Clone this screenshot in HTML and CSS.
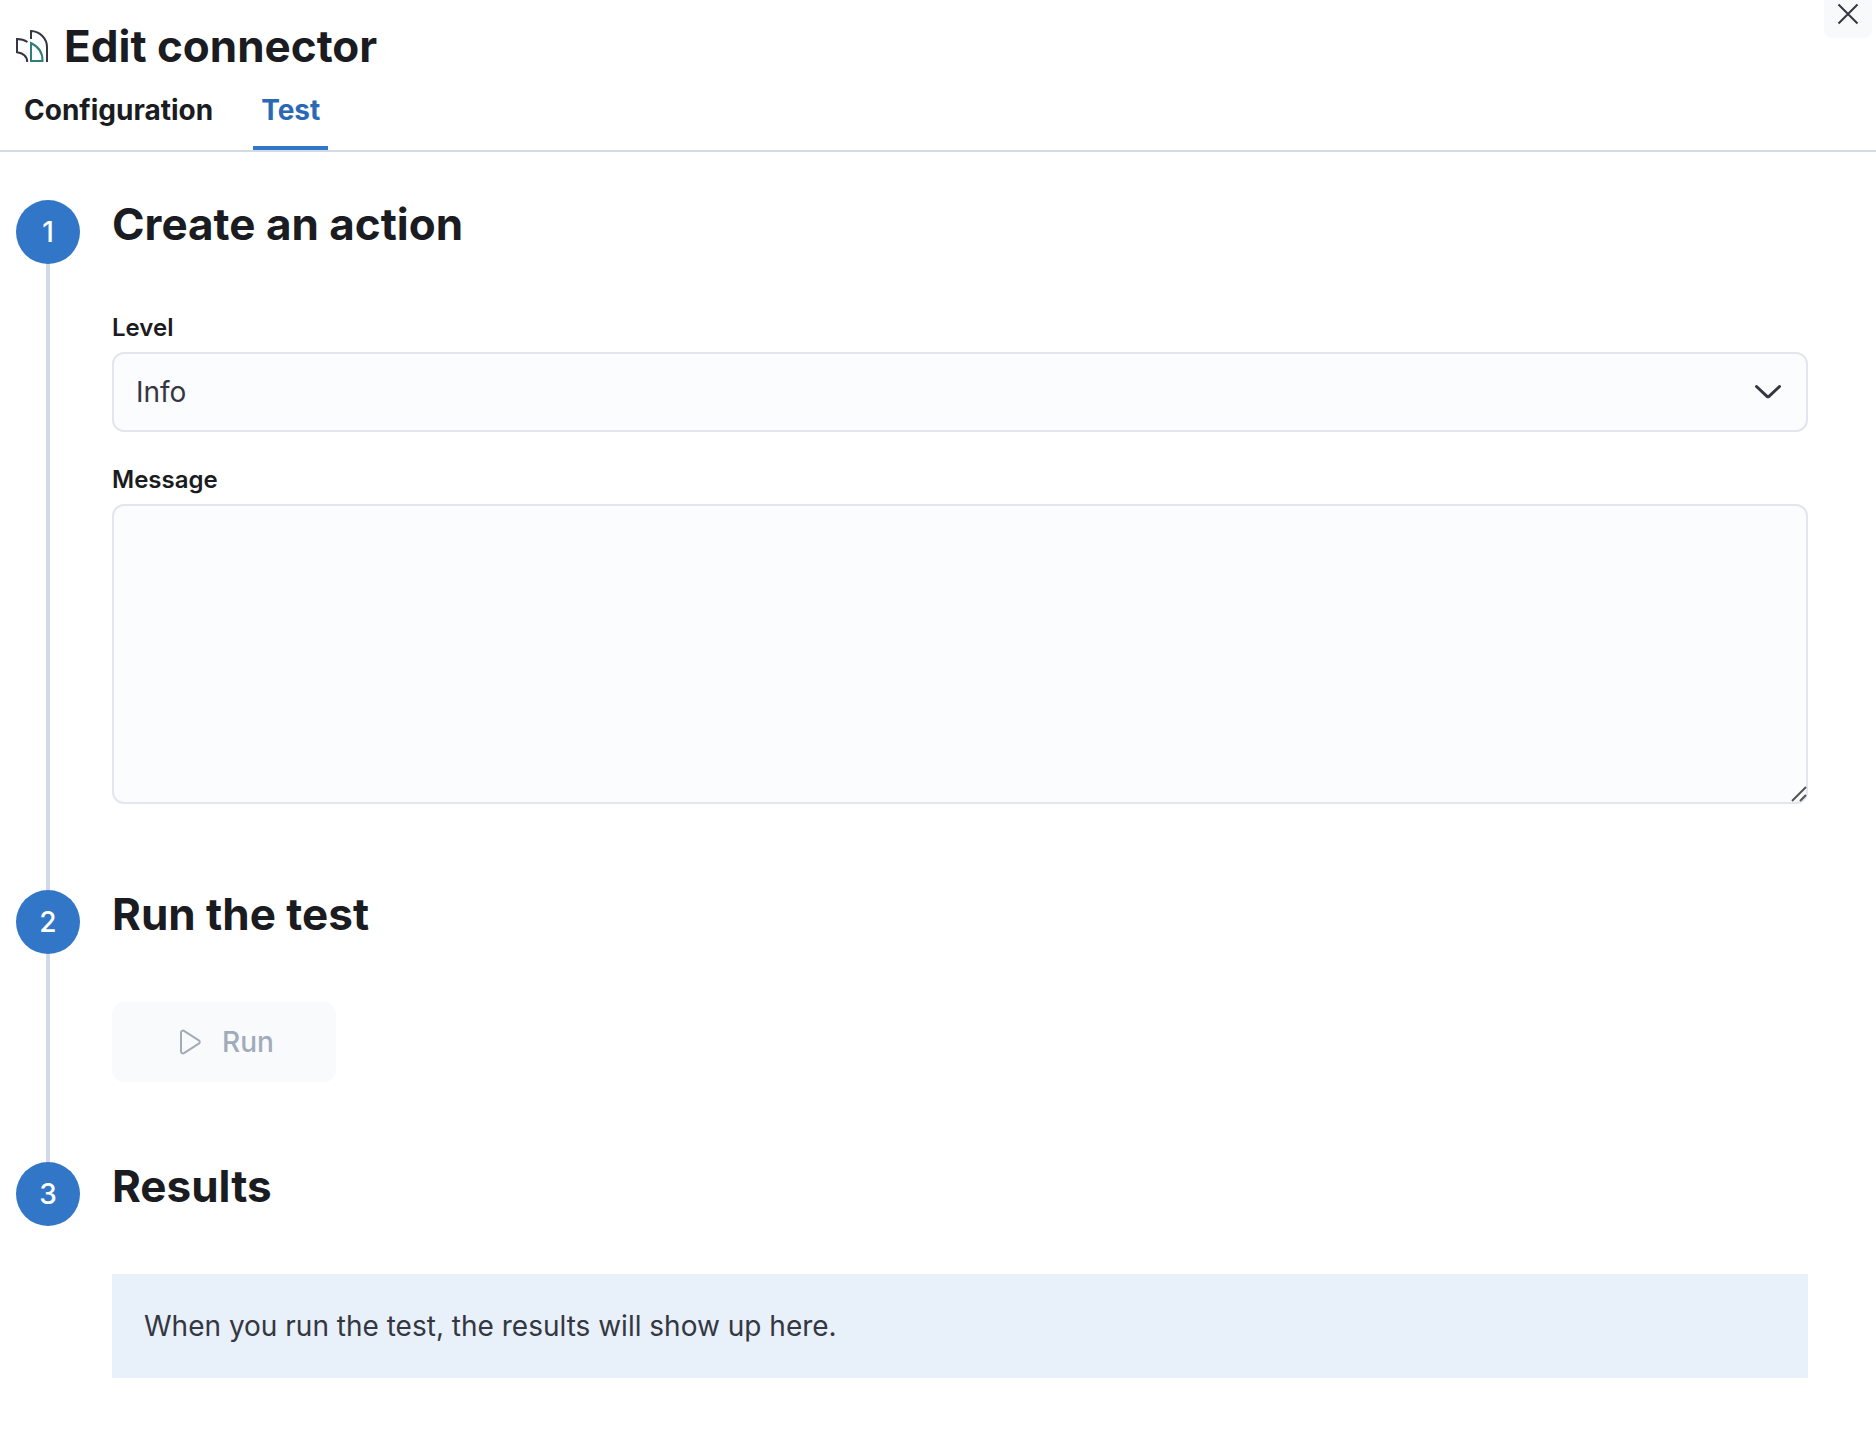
FILE: index.html
```html
<!DOCTYPE html>
<html lang="en">
<head>
<meta charset="utf-8">
<title>Edit connector</title>
<meta name="viewport" content="width=device-width, initial-scale=1">
<link rel="stylesheet" href="styles.css">
</head>
<body>
<main class="flyout">
  <header class="flyout-header">
    <div class="title-row">
      <svg class="logo" viewBox="0 0 32 32" fill="none" stroke-width="2" aria-hidden="true">
        <path stroke="#343741" d="M11.5 12C8.5 10 5 9 1 9v13.200c6 .5 10.200 4.500 10.200 9.800"/>
        <path stroke="#343741" d="M15 9V1c9 .3 16 7.500 16 16v15"/>
        <path stroke="#2d7f78" d="M15 13v18h11.500c.3-8-4.500-14.500-11.500-18z"/>
      </svg>
      <h1 class="heading">Edit connector</h1>
    </div>
    <nav class="tabs">
      <a class="tab" href="#configuration">Configuration</a>
      <a class="tab tab-selected" href="#test" aria-current="page">Test</a>
    </nav>
  </header>

  <section class="steps">
    <div class="step">
      <span class="step-number">1</span>
      <div class="step-body">
        <h2 class="heading">Create an action</h2>
        <form class="step-content form">
          <div class="field">
            <label class="label" for="level">Level</label>
            <div class="control">
              <select class="input select" id="level"><option>Info</option></select>
              <svg class="select-arrow" viewBox="0 0 32 32" aria-hidden="true"><path d="M4.500 10.500 15 20.300a1.500 1.500 0 0 0 2 0L27.500 10.500"/></svg>
            </div>
          </div>
          <div class="field">
            <label class="label" for="message">Message</label>
            <div class="control">
              <textarea class="input textarea" id="message"></textarea>
              <svg class="grip" viewBox="0 0 16 16" aria-hidden="true"><path d="M1 15 15 1M9 15l6-6"/></svg>
            </div>
          </div>
        </form>
      </div>
    </div>

    <div class="step">
      <span class="step-number">2</span>
      <div class="step-body">
        <h2 class="heading">Run the test</h2>
        <div class="step-content">
          <button class="run" type="button" disabled>
            <svg class="run-icon" viewBox="0 0 32 32" aria-hidden="true"><path d="M7 6.500v19a2 2 0 0 0 3 1.700l14.800-9.500a2 2 0 0 0 0-3.400L10 4.800a2 2 0 0 0-3 1.700z"/></svg>
            <span>Run</span>
          </button>
        </div>
      </div>
    </div>

    <div class="step">
      <span class="step-number">3</span>
      <div class="step-body">
        <h2 class="heading">Results</h2>
        <div class="step-content">
          <p class="callout">When you run the test, the results will show up here.</p>
        </div>
      </div>
    </div>
  </section>

  <button class="close" type="button" aria-label="Close">
    <svg class="close-icon" viewBox="0 0 24 24" aria-hidden="true"><path d="M2.500 2.500l19 19M21.500 2.500l-19 19"/></svg>
  </button>
</main>
</body>
</html>
```

FILE: styles.css
```css
* {
  box-sizing: border-box;
}

body {
  margin: 0;
  background: #fff;
  color: #343741;
  font-family: Inter, "Liberation Sans", sans-serif;
  font-size: 28px;
  line-height: 40px;
}

.flyout {
  position: relative;
  min-height: 100vh;
}

.flyout-header {
  padding-top: 22px;
  border-bottom: 2px solid #d3dae6;
}

.title-row {
  display: flex;
  align-items: center;
  gap: 16px;
  padding-left: 16px;
}

.logo {
  width: 32px;
  height: 32px;
}

.heading {
  margin: 0;
  color: #1a1c21;
  font-size: 44px;
  font-weight: 700;
  line-height: 48px;
}

.tabs {
  display: flex;
  gap: 32px;
  padding-left: 16px;
}

.tab {
  padding: 20px 8px 16px;
  border-bottom: 4px solid transparent;
  color: #1a1c21;
  font-weight: 700;
  text-decoration: none;
}

.tab-selected {
  border-bottom-color: #3276c8;
  color: #2b69b4;
}

.steps {
  padding: 48px 68px 0 16px;
}

.step {
  display: grid;
  grid-template-columns: 64px 1fr;
  column-gap: 32px;
  padding-bottom: 80px;
  background: linear-gradient(#d3dae6, #d3dae6) 30px 0 / 4px 100% no-repeat;
}

.step:last-child {
  padding-bottom: 48px;
  background: none;
}

.step-number {
  height: 64px;
  border-radius: 50%;
  background: #3276c8;
  color: #fff;
  font-weight: 500;
  line-height: 64px;
  text-align: center;
}

.step-content {
  margin-top: 64px;
}

.form {
  display: grid;
  gap: 32px;
  padding-bottom: 6px;
}

.label {
  display: block;
  margin-bottom: 8px;
  color: #1a1c21;
  font-size: 24px;
  font-weight: 600;
  line-height: 32px;
}

.control {
  position: relative;
}

.input {
  display: block;
  width: 100%;
  padding: 0 22px;
  border: 2px solid #e3e5ef;
  border-radius: 12px;
  outline: none;
  background: #fbfcfd;
  color: #343741;
  font: inherit;
}

.select {
  height: 80px;
  appearance: none;
}

.select-arrow {
  position: absolute;
  top: 24px;
  right: 24px;
  width: 32px;
  height: 32px;
  fill: none;
  stroke: #343741;
  stroke-width: 3;
  stroke-linecap: round;
  pointer-events: none;
}

.textarea {
  height: 300px;
  padding: 22px;
  resize: none;
}

.grip {
  position: absolute;
  right: 1px;
  bottom: 2px;
  width: 16px;
  height: 16px;
  fill: none;
  stroke: #555;
  stroke-width: 2;
  pointer-events: none;
}

.run {
  display: flex;
  align-items: center;
  justify-content: center;
  gap: 16px;
  width: 224px;
  height: 80px;
  padding: 0;
  border: 0;
  border-radius: 12px;
  background: #f9fafc;
  color: #a2abba;
  font: inherit;
  font-weight: 500;
}

.run-icon {
  width: 32px;
  height: 32px;
  fill: none;
  stroke: #a2abba;
  stroke-width: 2;
}

.callout {
  margin: 0;
  padding: 32px;
  background: #e8f0fa;
}

.close {
  position: absolute;
  top: -10px;
  right: 4px;
  display: flex;
  align-items: center;
  justify-content: center;
  width: 48px;
  height: 48px;
  padding: 0;
  border: 0;
  border-radius: 8px;
  background: #f8f9fb;
}

.close-icon {
  width: 24px;
  height: 24px;
  fill: none;
  stroke: #343741;
  stroke-width: 2;
}
```
